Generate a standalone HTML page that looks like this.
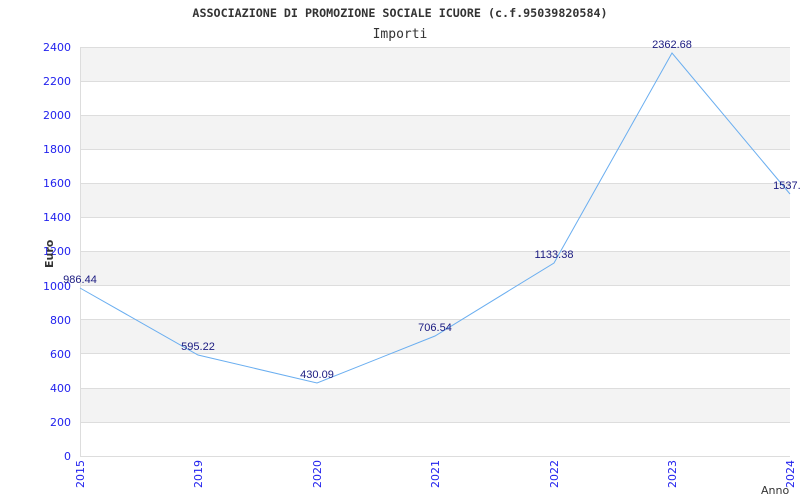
<!DOCTYPE html><html><head><style>body{margin:0;background:#fff}svg{display:block}</style></head><body>
<svg width="800" height="500" xmlns="http://www.w3.org/2000/svg" font-family="DejaVu Sans, sans-serif">
<rect width="800" height="500" fill="#fff"/>
<g fill="#f3f3f3">
<rect x="80" y="47" width="710" height="34"/><rect x="80" y="115" width="710" height="34"/><rect x="80" y="183" width="710" height="34"/><rect x="80" y="251" width="710" height="34"/><rect x="80" y="319" width="710" height="34"/><rect x="80" y="388" width="710" height="34"/>
</g>
<g stroke="#ddd" stroke-width="1">
<line x1="80" y1="47.5" x2="790" y2="47.5"/><line x1="80" y1="81.5" x2="790" y2="81.5"/><line x1="80" y1="115.5" x2="790" y2="115.5"/><line x1="80" y1="149.5" x2="790" y2="149.5"/><line x1="80" y1="183.5" x2="790" y2="183.5"/><line x1="80" y1="217.5" x2="790" y2="217.5"/><line x1="80" y1="251.5" x2="790" y2="251.5"/><line x1="80" y1="285.5" x2="790" y2="285.5"/><line x1="80" y1="319.5" x2="790" y2="319.5"/><line x1="80" y1="353.5" x2="790" y2="353.5"/><line x1="80" y1="388.5" x2="790" y2="388.5"/><line x1="80" y1="422.5" x2="790" y2="422.5"/><line x1="80" y1="456.5" x2="790" y2="456.5"/>
<line x1="80.5" y1="47" x2="80.5" y2="457"/>
</g>
<text x="400" y="17" text-anchor="middle" font-family="DejaVu Sans Mono, monospace" font-weight="bold" font-size="11.7" fill="#333">ASSOCIAZIONE DI PROMOZIONE SOCIALE ICUORE (c.f.95039820584)</text>
<text x="400" y="38" text-anchor="middle" font-family="DejaVu Sans Mono, monospace" font-size="13" fill="#333">Importi</text>
<g font-size="11" text-anchor="end" style="fill:#2222ee">
<text x="71" y="51">2400</text><text x="71" y="85">2200</text><text x="71" y="119">2000</text><text x="71" y="153">1800</text><text x="71" y="187">1600</text><text x="71" y="221">1400</text><text x="71" y="255">1200</text><text x="71" y="290">1000</text><text x="71" y="358">600</text><text x="71" y="324">800</text><text x="71" y="392">400</text><text x="71" y="426">200</text><text x="71" y="460">0</text>
</g>
<g style="fill:#2222ee" font-size="11" text-anchor="end">
<text transform="translate(84,460) rotate(-90)">2015</text><text transform="translate(202,460) rotate(-90)">2019</text><text transform="translate(321,460) rotate(-90)">2020</text><text transform="translate(439,460) rotate(-90)">2021</text><text transform="translate(558,460) rotate(-90)">2022</text><text transform="translate(676,460) rotate(-90)">2023</text><text transform="translate(794,460) rotate(-90)">2024</text>
</g>
<text transform="translate(53,268) rotate(-90)" font-size="11" font-weight="bold" fill="#333">Euro</text>
<text x="761" y="494" font-size="11" fill="#333">Anno</text>
<polyline fill="none" stroke="#6aaef0" stroke-width="1" points="80,288 198,355 317,383 435,336 554,263 672,53 790,194"/>
<g font-family="Liberation Sans, sans-serif" font-size="11" fill="#1a1a80" text-anchor="middle">
<text x="80" y="283">986.44</text><text x="198" y="350">595.22</text><text x="317" y="378">430.09</text><text x="435" y="331">706.54</text><text x="554" y="258">1133.38</text><text x="672" y="48">2362.68</text><text x="790" y="189">1537.1</text>
</g>
</svg>
</body></html>
